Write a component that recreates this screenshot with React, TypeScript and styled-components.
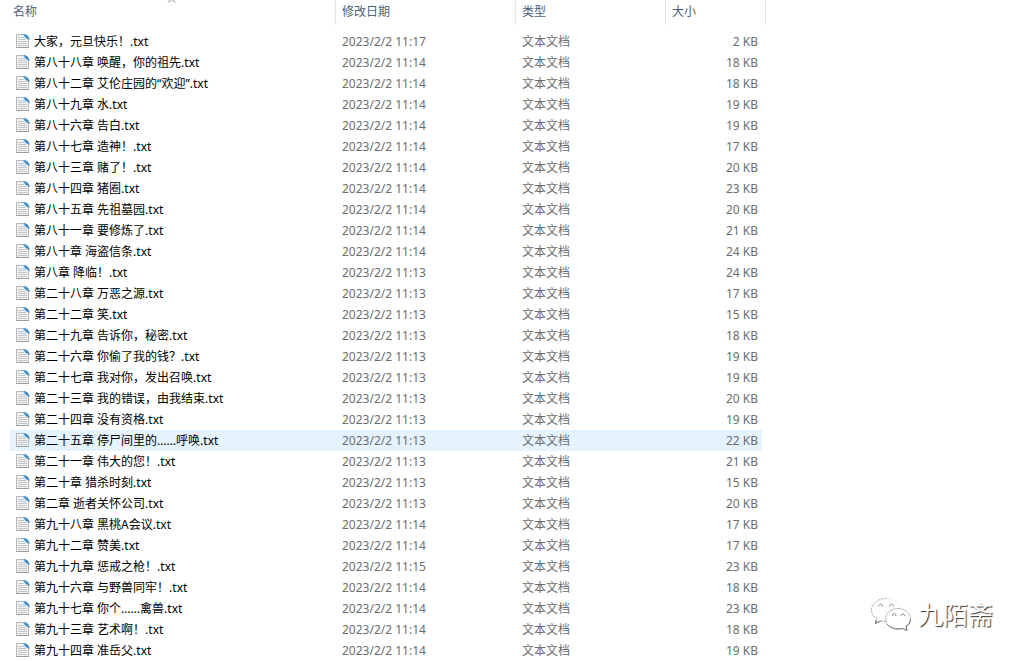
import React from "react";
import styled, { createGlobalStyle } from "styled-components";

const GlobalStyle = createGlobalStyle`
  * { box-sizing: border-box; }
  body {
    margin: 0;
    background: #fff;
    font-family: "Noto Sans", "Noto Sans CJK SC", sans-serif;
    font-size: 12px;
    line-height: 20px;
  }
`;

const Page = styled.main`
  position: relative;
  padding-left: 10px;
  overflow: hidden;
`;

const FileTable = styled.table`
  table-layout: fixed;
  width: 756px;
  border-collapse: separate;
  border-spacing: 0;
`;

const Column = styled.col<{ $width: number }>`
  width: ${(p) => p.$width}px;
`;

const HeaderCell = styled.th<{ $first?: boolean }>`
  position: relative;
  height: 25px;
  padding: 0 0 0 ${(p) => (p.$first ? 3 : 6)}px;
  border-right: 1px solid #e5e5e5;
  text-align: left;
  vertical-align: top;
`;

const SortButton = styled.button`
  display: block;
  width: 100%;
  padding: 2px 0 0;
  border: 0;
  background: none;
  color: #4c607a;
  font: inherit;
  font-weight: 400;
  line-height: 20px;
  text-align: left;
`;

const SortMark = styled.svg`
  position: absolute;
  top: 0;
  left: 157px;
`;

const Body = styled.tbody`
  &::before {
    content: "";
    display: table-row;
    height: 6px;
  }
`;

const Row = styled.tr<{ $active?: boolean }>`
  background: ${(p) => (p.$active ? "linear-gradient(#e5f3ff, #e5f3ff) 0 0 / 752px 100% no-repeat" : "none")};
`;

const Cell = styled.td<{ $right?: boolean }>`
  height: 21px;
  padding: 0 ${(p) => (p.$right ? 8 : 0)}px 0 6px;
  color: #6d6d6d;
  text-align: ${(p) => (p.$right ? "right" : "left")};
  white-space: nowrap;
`;

const NameCell = styled(Cell)`
  color: #000;
`;

const FileName = styled.span`
  display: flex;
  align-items: center;
  gap: 4px;
`;

const FileIcon = styled.svg`
  flex: none;
  margin-bottom: 2px;
`;

const Watermark = styled.div`
  position: absolute;
  right: 34px;
  bottom: 29px;
  display: flex;
  align-items: center;
  gap: 6px;
  color: #fff;
  font-size: 25px;
  line-height: 36px;
  text-shadow: 1px 1px 1px #333;
`;

const DocumentIcon = () => (
  <FileIcon width="14" height="16" viewBox="0 0 14 16" aria-hidden="true">
    <path d="M.5 1.500h8.500l3.500 4v9H.5z" fill="#f3f3f3" stroke="#b4b7b9" />
    <path d="M.5 14.500h12.500" stroke="#9a9d9f" />
    <path d="M2 4.500h6M2 6.500h8M2 8.500h9M2 10.500h9M2 12.500h9" stroke="#c3c5c7" />
    <path d="M7 1c3.500 0 6 2 6.800 6L11.500 6 9.500 5z" fill="#3f8fcd" />
    <path d="M7.500 1.500l2 3.500" fill="none" stroke="#8cc4e8" />
  </FileIcon>
);

const ChatLogo = () => (
  <svg width="42" height="34" viewBox="0 0 42 34" aria-hidden="true">
    <g fill="#fff" strokeLinejoin="round">
      <path d="M16 1.500C8 1.500 1.500 6.700 1.500 13c0 4 2.200 7 5.500 9l-1.500 4.500 5.500-2.700c2 .6 4 .7 6 .7" stroke="#aaa" strokeDasharray="2 1" />
      <path d="M16 1.500c7 0 13 4 14 10" fill="none" stroke="#ddd" strokeDasharray="1 1" />
      <path d="M28 11.500c-7 0-12.500 4.700-12.500 10.500S21 32 28 32c1.500 0 3-.2 4.500-.6l4.500 2.100-1-4c3-1.700 4.500-4.300 4.500-7.500 0-5.800-5.500-10.500-12.500-10.500z" stroke="#bbb" />
      <path d="M17 27c2 3 6 5 11 5 1.500 0 3-.2 4.500-.6l4.500 2.100-1-4c3-2 4.500-4.600 4.500-7.500M6 23l-.5 3.500 5.500-2.700" fill="none" stroke="#777" />
    </g>
    <g fill="none" stroke="#888">
      <path d="M8.500 9.500c0-3 4-3 4 0M19.500 9.500c0-3 4-3 4 0M22.500 19c0-3 3.500-3 3.500 0M31 19c0-3 3.500-3 3.500 0" />
    </g>
  </svg>
);

type FileEntry = [name: string, time: string, size: number];

const files: FileEntry[] = [
  ["大家，元旦快乐！.txt", "11:17", 2],
  ["第八十八章 唤醒，你的祖先.txt", "11:14", 18],
  ["第八十二章 艾伦庄园的“欢迎”.txt", "11:14", 18],
  ["第八十九章 水.txt", "11:14", 19],
  ["第八十六章 告白.txt", "11:14", 19],
  ["第八十七章 造神！.txt", "11:14", 17],
  ["第八十三章 赌了！.txt", "11:14", 20],
  ["第八十四章 猪圈.txt", "11:14", 23],
  ["第八十五章 先祖墓园.txt", "11:14", 20],
  ["第八十一章 要修炼了.txt", "11:14", 21],
  ["第八十章 海盗信条.txt", "11:14", 24],
  ["第八章 降临！.txt", "11:13", 24],
  ["第二十八章 万恶之源.txt", "11:13", 17],
  ["第二十二章 笑.txt", "11:13", 15],
  ["第二十九章 告诉你，秘密.txt", "11:13", 18],
  ["第二十六章 你偷了我的钱？.txt", "11:13", 19],
  ["第二十七章 我对你，发出召唤.txt", "11:13", 19],
  ["第二十三章 我的错误，由我结束.txt", "11:13", 20],
  ["第二十四章 没有资格.txt", "11:13", 19],
  ["第二十五章 停尸间里的……呼唤.txt", "11:13", 22],
  ["第二十一章 伟大的您！.txt", "11:13", 21],
  ["第二十章 猎杀时刻.txt", "11:13", 15],
  ["第二章 逝者关怀公司.txt", "11:13", 20],
  ["第九十八章 黑桃A会议.txt", "11:14", 17],
  ["第九十二章 赞美.txt", "11:14", 17],
  ["第九十九章 惩戒之枪！.txt", "11:15", 23],
  ["第九十六章 与野兽同牢！.txt", "11:14", 18],
  ["第九十七章 你个……禽兽.txt", "11:14", 23],
  ["第九十三章 艺术啊！.txt", "11:14", 18],
  ["第九十四章 准岳父.txt", "11:14", 19],
];

const activeFile = "第二十五章 停尸间里的……呼唤.txt";

export default function App() {
  return (
    <>
      <GlobalStyle />
      <Page lang="zh-CN">
        <FileTable>
          <colgroup>
            <Column $width={326} />
            <Column $width={180} />
            <Column $width={150} />
            <Column $width={100} />
          </colgroup>
          <thead>
            <tr>
              <HeaderCell $first scope="col" aria-sort="ascending">
                <SortButton type="button">名称</SortButton>
                <SortMark width="9" height="4" viewBox="0 0 9 4" aria-hidden="true">
                  <path d="M1 2.500L4.500 -1 8 2.500" fill="none" stroke="#777" />
                </SortMark>
              </HeaderCell>
              <HeaderCell scope="col"><SortButton type="button">修改日期</SortButton></HeaderCell>
              <HeaderCell scope="col"><SortButton type="button">类型</SortButton></HeaderCell>
              <HeaderCell scope="col"><SortButton type="button">大小</SortButton></HeaderCell>
            </tr>
          </thead>
          <Body>
            {files.map(([name, time, size]) => (
              <Row key={name} $active={name === activeFile}>
                <NameCell>
                  <FileName>
                    <DocumentIcon />
                    {name}
                  </FileName>
                </NameCell>
                <Cell>2023/2/2 {time}</Cell>
                <Cell>文本文档</Cell>
                <Cell $right>{size} KB</Cell>
              </Row>
            ))}
          </Body>
        </FileTable>
        <Watermark>
          <ChatLogo />
          九陌斋
        </Watermark>
      </Page>
    </>
  );
}
